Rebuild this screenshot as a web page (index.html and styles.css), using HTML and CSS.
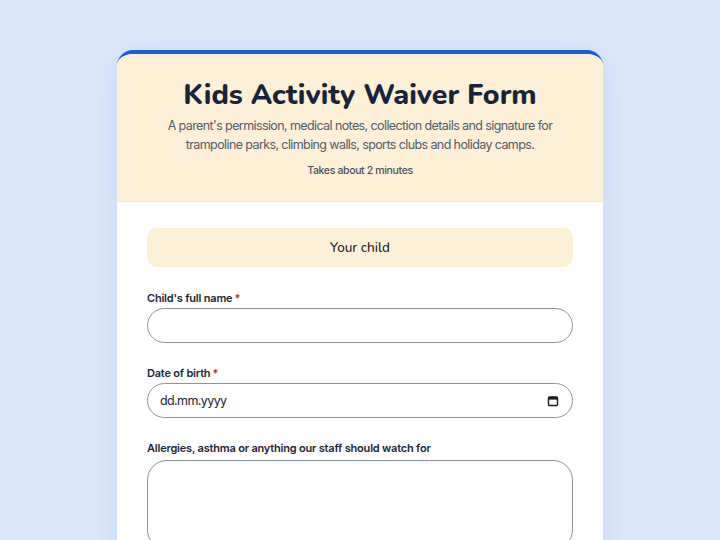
FILE: index.html
```html
<!DOCTYPE html>
<html lang="en">
<head>
<meta charset="utf-8">
<title>Kids Activity Waiver Form</title>
<link rel="stylesheet" href="styles.css">
</head>
<body>
<main class="card">
  <header class="card-head">
    <h1 class="title">Kids Activity Waiver Form</h1>
    <p class="lead">A parent's permission, medical notes, collection details and signature for trampoline parks, climbing walls, sports clubs and holiday camps.</p>
    <p class="time">Takes about 2 minutes</p>
  </header>
  <form class="card-body">
    <h2 class="section">Your child</h2>
    <div class="field">
      <label class="label" for="name">Child's full name<span class="req">*</span></label>
      <input class="input" id="name" type="text">
    </div>
    <div class="field">
      <label class="label" for="dob">Date of birth<span class="req">*</span></label>
      <div class="input date">
        <span class="ph">dd.mm.yyyy</span>
        <svg class="cal" width="12" height="12" viewBox="0 0 12 12"><rect x="1.5" y="2" width="9" height="8.5" rx="1" fill="none" stroke="#1a1a1a" stroke-width="1.4"/><rect x="1.5" y="2" width="9" height="2.6" fill="#1a1a1a"/></svg>
      </div>
    </div>
    <div class="field">
      <label class="label" for="notes">Allergies, asthma or anything our staff should watch for</label>
      <textarea class="input area" id="notes"></textarea>
    </div>
  </form>
</main>
</body>
</html>
```

FILE: styles.css
```css
html, body {
  margin: 0;
  padding: 0;
}
body {
  background: #dbe8fb;
  font-family: Inter, "Noto Sans", sans-serif;
  color: #1b2436;
  height: 540px;
  overflow: hidden;
}
.card {
  width: 486px;
  margin: 50px auto 0;
  background: #ffffff;
  border-top: 4px solid #1c5ed4;
  border-radius: 16px 16px 0 0;
  box-shadow: 0 8px 30px rgba(40, 80, 150, 0.12);
  overflow: hidden;
}
.card-head {
  background: #fef0d6;
  text-align: center;
  padding: 22px 50px 23px;
  border-bottom: 1px solid #e6e8ec;
}
.title {
  margin: 0;
  font-family: Nunito, Lato, sans-serif;
  font-weight: 800;
  font-size: 28.5px;
  line-height: 38px;
  color: #17243a;
}
.lead {
  margin: 2px 0 0;
  font-size: 12.5px;
  line-height: 19px;
  letter-spacing: -0.6px;
  color: #525b6c;
}
.time {
  margin: 10px 0 0;
  font-size: 10.5px;
  line-height: 14px;
  letter-spacing: -0.35px;
  color: #4a5262;
  font-weight: 500;
}
.card-body {
  padding: 26px 30px 20px;
  display: flex;
  flex-direction: column;
}
.section {
  margin: 0 0 24px;
  background: #fef0d6;
  border-radius: 10px;
  height: 39px;
  display: flex;
  align-items: center;
  justify-content: center;
  font-family: Nunito, Lato, sans-serif;
  font-weight: 500;
  font-size: 13.5px;
  color: #1b2436;
}
.field {
  display: flex;
  flex-direction: column;
  margin-bottom: 23px;
}
.label {
  font-size: 11px;
  font-weight: 600;
  line-height: 14px;
  letter-spacing: -0.2px;
  margin-bottom: 3px;
  color: #1b2436;
}
.req {
  color: #d0202e;
  margin-left: 2px;
}
.input {
  box-sizing: border-box;
  height: 35px;
  border: 1.5px solid #8a92a8;
  border-radius: 18px;
  background: #ffffff;
  font: inherit;
}
.date {
  display: flex;
  align-items: center;
  justify-content: space-between;
  padding: 0 13px 0 12px;
  font-size: 12.5px;
  letter-spacing: -0.6px;
  color: #1b2436;
}
.area {
  height: 90px;
  margin-top: 2px;
  border-radius: 20px;
  resize: vertical;
}
```
